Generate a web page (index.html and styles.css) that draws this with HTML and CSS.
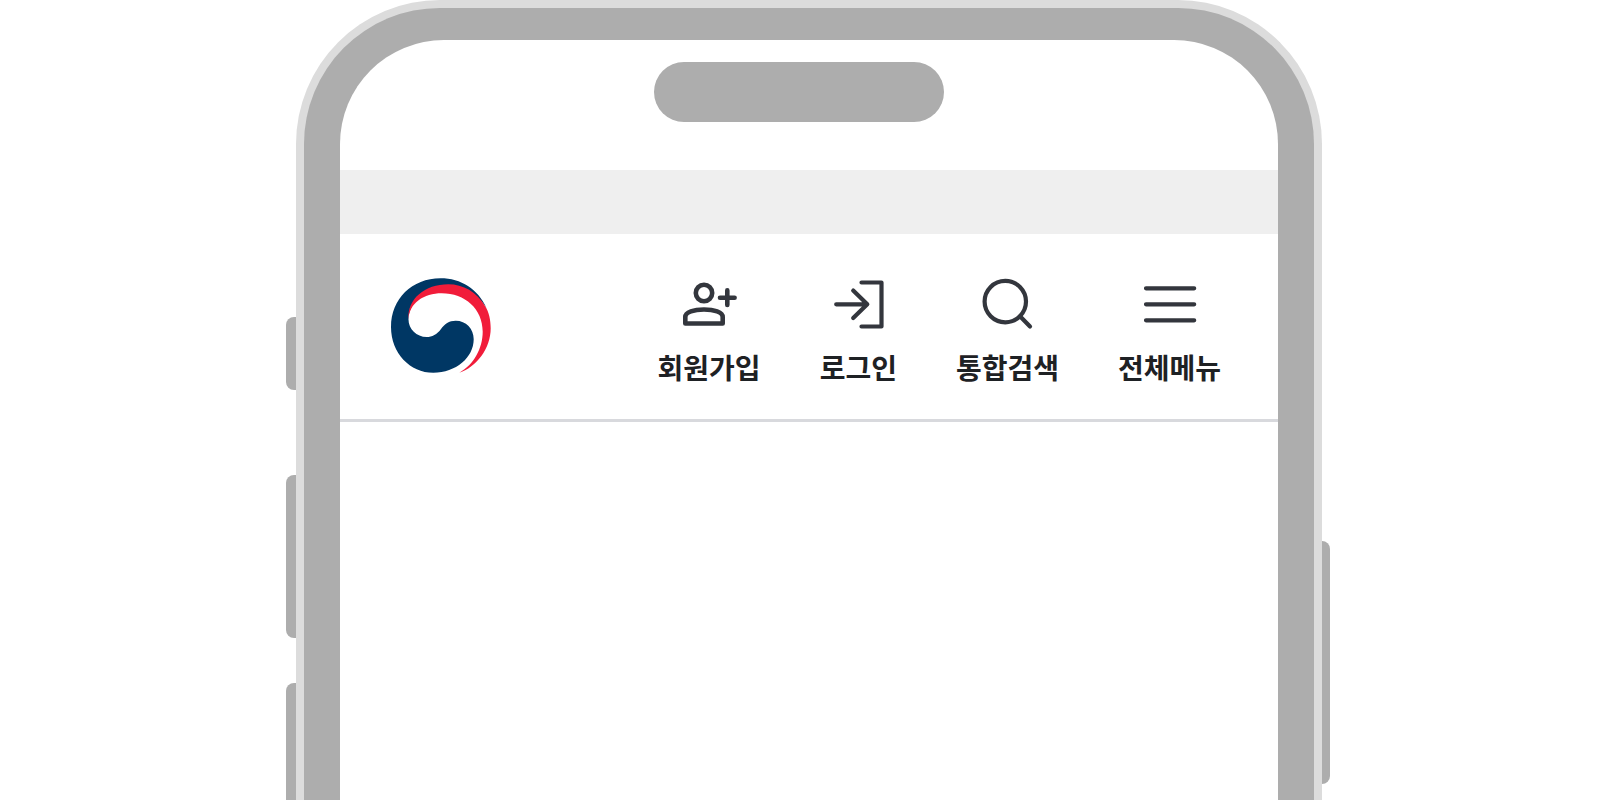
FILE: index.html
```
<!DOCTYPE html>
<html lang="ko">
    <head>
        <meta charset="utf-8">
        <title>모바일 헤더</title>
        <link rel="stylesheet" href="styles.css">
    </head>
    <body>
        <div class="device">
            <div class="keys keys-left">
                <span class="key key-small"></span>
                <span class="key key-medium"></span>
                <span class="key key-medium"></span>
            </div>
            <div class="frame">
                <div class="screen">
                    <div class="status"><div class="notch"></div></div>
                    <div class="banner"></div>
                    <header class="header">
                        <a class="logo" href="#" aria-label="홈">
                            <svg width="100" height="96" viewBox="0 0 100 96">
                                <path fill="#003764" d="M95.5 30C87 11 70 0.3 49.5 0.3C21 0.3 0 21 0 48.9C0 75 19 94.7 42.3 94.7C65 94.7 82.7 79.5 82.7 61.3C82.7 50.5 75 42.7 64.7 42.7C58 42.7 53.5 46 50 51C46 56.5 41 59 35.7 59C25.5 59 17.5 51 17.5 41.5C18 23 35 8 57.3 8C73 8 87 17 95.5 30Z"/>
                                <path fill="#f11c3a" d="M17.5 41.5C16 21 34 6.3 57.3 6.3C72 6.3 86 14 94 28C98 34 99.7 42 99.7 50.3C99.7 70 86 89 68.3 94.7C83 86.5 91.7 70 91.7 53.7C91.7 31 74 15.3 50.7 15.3C33 15.3 18 25 17.5 41.5Z"/>
                            </svg>
                        </a>
                        <nav class="menu">
                            <button type="button" class="item">
                                <svg class="icon icon-user" viewBox="0 0 64 64">
                                    <circle cx="27" cy="21" r="8.2"/>
                                    <path d="M8.3 51.5V45C8.3 40 17 37.5 27 37.5S45.7 40 45.7 45V51.5Z"/>
                                    <path d="M43 25.7H57.6M50.3 18.4V33"/>
                                </svg>
                                회원가입
                            </button>
                            <button type="button" class="item">
                                <svg class="icon" viewBox="0 0 64 64">
                                    <path d="M35.5 10.5H55.5V54.5H35.5"/>
                                    <path d="M10.2 32.3H41.3M27.2 18.6L41.3 32.3L27.2 46"/>
                                </svg>
                                로그인
                            </button>
                            <button type="button" class="item">
                                <svg class="icon" viewBox="0 0 64 64">
                                    <circle cx="30.3" cy="29.6" r="20.7"/>
                                    <path d="M45 44.3L55 54.4"/>
                                </svg>
                                통합검색
                            </button>
                            <button type="button" class="item">
                                <svg class="icon" viewBox="0 0 64 64">
                                    <path d="M9 16.3H57.2M9 32.3H57.2M9 48.3H57.2"/>
                                </svg>
                                전체메뉴
                            </button>
                        </nav>
                    </header>
                </div>
            </div>
            <div class="keys keys-right">
                <span class="key key-large"></span>
            </div>
        </div>
    </body>
</html>
```
FILE: styles.css
```
*{
    box-sizing:border-box;
}
body{
    margin:0;
    font-family:'Noto Sans CJK KR', sans-serif;
    background-color:#fff;
}
.device{
    display:flex;
    max-width:1048px;
    height:100vh;
    margin:0 auto;
    padding-left:4px;
    overflow:hidden;
}

/* side keys */
.keys{
    display:flex;
    flex-direction:column;
    flex:none;
}
.keys-left{
    width:10px;
    padding-top:317px;
}
.keys-right{
    width:8px;
    padding-top:541px;
}
.key{
    flex:none;
    background-color:#adadad;
}
.keys-left .key{
    border-radius:8px 0 0 8px;
}
.keys-right .key{
    border-radius:0 8px 8px 0;
}
.key-small{
    height:73px;
    margin-bottom:85px;
}
.key-medium{
    height:163px;
    margin-bottom:45px;
}
.key-large{
    height:243px;
}

/* phone body */
.frame{
    flex:1;
    min-width:0;
    padding:32px 36px 0;
    border:8px solid #dcdcdc;
    border-bottom:0;
    border-radius:144px 144px 0 0;
    background-color:#adadad;
}
.screen{
    height:100%;
    border-radius:104px 104px 0 0;
    background-color:#fff;
}
.status{
    height:130px;
    padding:22px 20px 0 0;
}
.notch{
    width:290px;
    height:60px;
    margin:0 auto;
    border-radius:30px;
    background-color:#adadad;
}
.banner{
    height:64px;
    background-color:#efefef;
}

.header{
    display:flex;
    justify-content:space-between;
    align-items:flex-start;
    height:188px;
    padding:38px 57px 0 51px;
    border-bottom:3px solid #d8d9dd;
}
.logo{
    margin-top:6px;
}
.logo svg{
    display:block;
}
.menu{
    display:flex;
    gap:59px;
}
.item{
    display:flex;
    flex-direction:column;
    align-items:center;
    padding:0;
    border:0;
    background:none;
    color:#1e2124;
    font-family:inherit;
    font-size:28px;
    font-weight:700;
    line-height:62px;
    white-space:nowrap;
    cursor:pointer;
}
.icon{
    width:64px;
    height:64px;
    fill:none;
    stroke:#33363d;
    stroke-width:4.2;
    stroke-linecap:round;
    stroke-linejoin:round;
}
.icon-user{
    stroke-width:4.6;
}
```
